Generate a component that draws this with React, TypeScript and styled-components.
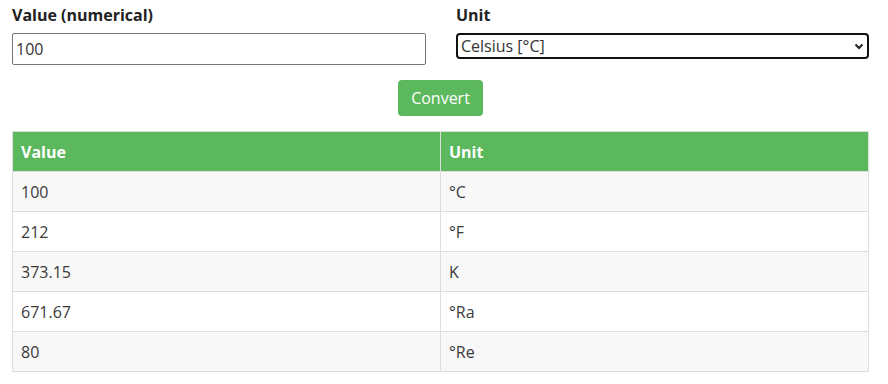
import React, { useState } from 'react'
import styled, { createGlobalStyle } from 'styled-components'

const GlobalStyle = createGlobalStyle`
  body {
    margin: 0;
    font-family: "Open Sans", "Liberation Sans", sans-serif;
    font-size: 16px;
    color: #212121;
    background: #fff;
  }
`

const Page = styled.div`
  width: 857px;
  padding: 4px 0 0 12px;
`

const FormRow = styled.div`
  display: grid;
  grid-template-columns: 414px 413px;
  column-gap: 30px;
`

const Field = styled.div`
  display: flex;
  flex-direction: column;
`

const Label = styled.label`
  font-weight: 700;
  font-size: 16px;
  line-height: 22px;
  color: #222;
  margin-bottom: 7px;
`

const TextInput = styled.input`
  box-sizing: border-box;
  height: 32px;
  padding: 1px 3px;
  border: 1px solid #767676;
  border-radius: 2px;
  font-family: inherit;
  font-size: 16px;
  color: #333;
  outline: none;
`

const SelectBox = styled.div`
  box-sizing: border-box;
  height: 26px;
  border: 2px solid #111;
  border-radius: 4px;
  display: flex;
  align-items: center;
  padding: 0 3px;
  font-size: 16px;
  color: #333;
`

const Chevron = styled.svg`
  margin-left: auto;
  margin-right: 0;
`

const ButtonRow = styled.div`
  display: flex;
  justify-content: center;
  padding: 15px 0 15px;
`

const Button = styled.button`
  box-sizing: border-box;
  width: 85px;
  height: 36px;
  border: none;
  border-radius: 4px;
  background: #5cb85c;
  color: #fff;
  font-family: inherit;
  font-size: 16px;
  cursor: pointer;
`

const Table = styled.table`
  width: 857px;
  border-collapse: collapse;
  border: 1px solid #ddd;
`

const HeadCell = styled.th`
  background: #5cb85c;
  color: #fff;
  font-weight: 700;
  text-align: left;
  height: 39px;
  padding: 0 8px;
  border-right: 1px solid #ddd;
  border-bottom: 1px solid #ddd;
  width: 50%;
`

const Row = styled.tr<{ $odd: boolean }>`
  background: ${p => (p.$odd ? '#f8f8f8' : '#fff')};
`

const Cell = styled.td`
  height: 39px;
  padding: 0 8px;
  border: 1px solid #ddd;
  color: #3a3a3a;
`

const rows = [
  ['100', '°C'],
  ['212', '°F'],
  ['373.15', 'K'],
  ['671.67', '°Ra'],
  ['80', '°Re']
]

export default function App () {
  const [value, setValue] = useState('100')

  return (
    <Page>
      <GlobalStyle />
      <FormRow>
        <Field>
          <Label htmlFor='value-input'>Value (numerical)</Label>
          <TextInput
            id='value-input'
            value={value}
            onChange={e => setValue(e.target.value)}
          />
        </Field>
        <Field>
          <Label>Unit</Label>
          <SelectBox>
            Celsius [°C]
            <Chevron width='10' height='7' viewBox='0 0 10 7'>
              <path d='M1.5 1.5 L5 5 L8.5 1.5' fill='none' stroke='#222' strokeWidth='2' />
            </Chevron>
          </SelectBox>
        </Field>
      </FormRow>
      <ButtonRow>
        <Button type='button'>Convert</Button>
      </ButtonRow>
      <Table>
        <thead>
          <tr>
            <HeadCell>Value</HeadCell>
            <HeadCell>Unit</HeadCell>
          </tr>
        </thead>
        <tbody>
          {rows.map(([v, u], i) => (
            <Row key={u} $odd={i % 2 === 0}>
              <Cell>{v}</Cell>
              <Cell>{u}</Cell>
            </Row>
          ))}
        </tbody>
      </Table>
    </Page>
  )
}
